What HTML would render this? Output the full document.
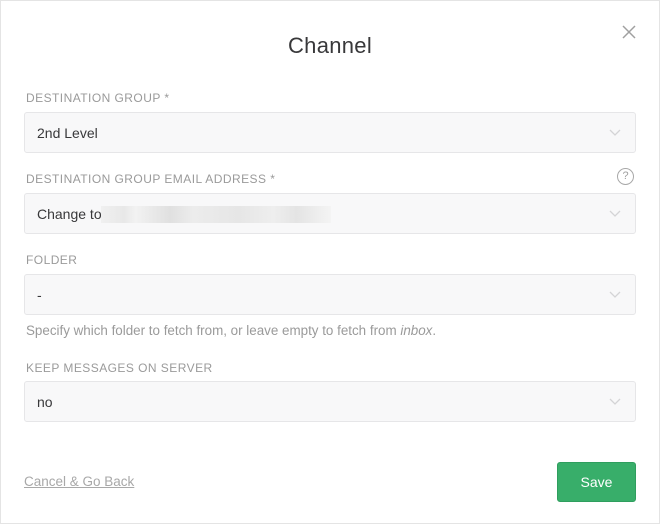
<!DOCTYPE html>
<html><head><style>
*{box-sizing:border-box;margin:0;padding:0}
body{width:660px;height:524px;background:#fff;font-family:"Liberation Sans",sans-serif;position:relative;overflow:hidden}
.frame{position:absolute;left:0;top:0;width:660px;height:524px;border:1px solid #e4e4e4}
.title{position:absolute;left:0;width:660px;top:33px;text-align:center;font-size:22px;color:#38383a;letter-spacing:0.3px}
.x{position:absolute;left:622px;top:25px}
.lbl{position:absolute;left:26px;font-size:12px;color:#9a9a9a;letter-spacing:0.45px;white-space:nowrap}
.f{position:absolute;left:24px;width:612px;height:41px;background:#f8f8f9;border:1px solid #e6e6e8;border-radius:3px;font-size:14px;color:#38383a;padding:12px 0 0 12px}
.f svg{position:absolute;right:14px;top:16px}
.help{position:absolute;left:26px;top:323px;font-size:13.4px;color:#9a9a9a;white-space:nowrap}
.cancel{position:absolute;left:24px;top:474px;font-size:13.5px;color:#a8a8a8;text-decoration:underline}
.save{position:absolute;left:557px;top:462px;width:79px;height:40px;background:#38ae6a;border:1px solid #2f9e5e;border-radius:3px;color:#fff;font-size:14px;text-align:center;line-height:38px}
.q{position:absolute;left:617px;top:168px;width:17px;height:17px;border:1.3px solid #a8a8a8;border-radius:50%;font-size:11px;color:#a0a0a0;text-align:center;line-height:15px}
.blur{position:absolute;left:101px;top:206px;width:230px;height:17px;background:linear-gradient(90deg,#f0f0f0 0,#e8e8e8 10%,#f2f2f2 15%,#e0e0e0 30%,#ececec 40%,#e6e6e6 60%,#eeeeee 75%,#e4e4e4 85%,#f4f4f4 100%)}
</style></head><body>
<div class="frame"></div>
<div class="title">Channel</div>
<svg class="x" width="14" height="14" viewBox="0 0 14 14"><path d="M1 1L13 13M13 1L1 13" stroke="#a0a0a0" stroke-width="1.5"/></svg>
<div class="lbl" style="top:91px">DESTINATION GROUP *</div>
<div class="f" style="top:112px">2nd Level<svg width="12" height="8" viewBox="0 0 12 8"><path d="M1 1l5 5 5-5" fill="none" stroke="#d4d4d6" stroke-width="1.3"/></svg></div>
<div class="lbl" style="top:172px">DESTINATION GROUP EMAIL ADDRESS *</div>
<div class="q">?</div>
<div class="f" style="top:193px">Change to<svg width="12" height="8" viewBox="0 0 12 8"><path d="M1 1l5 5 5-5" fill="none" stroke="#d4d4d6" stroke-width="1.3"/></svg></div>
<div class="blur"></div>
<div class="lbl" style="top:253px">FOLDER</div>
<div class="f" style="top:274px">-<svg width="12" height="8" viewBox="0 0 12 8"><path d="M1 1l5 5 5-5" fill="none" stroke="#d4d4d6" stroke-width="1.3"/></svg></div>
<div class="help">Specify which folder to fetch from, or leave empty to fetch from <i>inbox</i>.</div>
<div class="lbl" style="top:361px">KEEP MESSAGES ON SERVER</div>
<div class="f" style="top:381px">no<svg width="12" height="8" viewBox="0 0 12 8"><path d="M1 1l5 5 5-5" fill="none" stroke="#d4d4d6" stroke-width="1.3"/></svg></div>
<div class="cancel">Cancel &amp; Go Back</div>
<div class="save">Save</div>
</body></html>
